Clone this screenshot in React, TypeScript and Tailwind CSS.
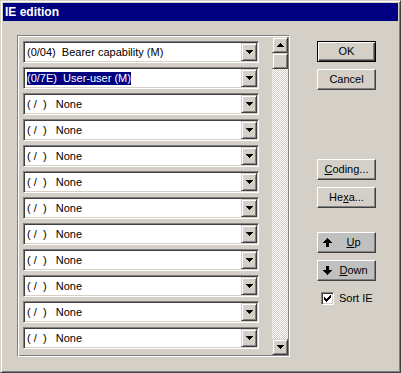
import React from "react";

const rows: string[] = [
    "(0/04)  Bearer capability (M)",
    "(0/7E)  User-user (M)",
    ...Array.from({ length: 10 }, () => "( /  )   None"),
];

const raised = "border border-t-[#d4d0c8] border-l-[#d4d0c8] border-r-[#404040] border-b-[#404040] shadow-[inset_1px_1px_#fff,inset_-1px_-1px_#808080] bg-[#d4d0c8]";
const button = "border border-t-white border-l-white border-r-[#404040] border-b-[#404040] shadow-[inset_-1px_-1px_#808080]";

// small black triangle, pixel rows
const Tri: React.FC<{ down?: boolean }> = ({ down }) => {
    const widths = down ? [7, 5, 3, 1] : [1, 3, 5, 7];
    return (
        <svg width="7" height="4" viewBox="0 0 7 4" shapeRendering="crispEdges">
            {widths.map((w, i) => (
                <rect key={i} x={(7 - w) / 2} y={i} width={w} height={1} fill="#000" />
            ))}
        </svg>
    );
};

const BigArrow: React.FC<{ down?: boolean }> = ({ down }) => {
    const head = [1, 3, 5, 7, 9];
    const parts = head.map((w, i) => ({ x: (9 - w) / 2, y: i, w }));
    const stem = [5, 6, 7, 8].map((y) => ({ x: 3, y, w: 3 }));
    const all = [...parts, ...stem];
    return (
        <svg width="9" height="9" viewBox="0 0 9 9" shapeRendering="crispEdges">
            {all.map((p, i) => (
                <rect key={i} x={p.x} y={down ? 8 - p.y : p.y} width={p.w} height={1} fill="#000" />
            ))}
        </svg>
    );
};

const Combo: React.FC<{ text: string; selected?: boolean }> = ({ text, selected }) => (
    <div className="h-[22px] w-[236px] bg-white border border-t-[#808080] border-l-[#808080] border-r-white border-b-white shadow-[inset_1px_1px_#404040,inset_-1px_-1px_#d4d0c8] p-[1px] flex">
        <div className="flex-1 flex items-center pl-[2px] whitespace-pre">
            {selected ? <span className="bg-[#000080] text-white leading-[13px]">{text}</span> : <span>{text}</span>}
        </div>
        <div className={`w-[16px] h-full flex items-center justify-center ${raised}`}>
            <Tri down />
        </div>
    </div>
);

const Btn: React.FC<{ children: React.ReactNode; className?: string }> = ({ children, className }) => (
    <div className={`h-[21px] w-[59px] flex items-center justify-center bg-[#d4d0c8] ${button} ${className ?? ""}`}>{children}</div>
);

export default function App() {
    return (
        <div className="w-[401px] h-[373px] bg-[#d4d0c8] border border-t-[#d4d0c8] border-l-[#d4d0c8] border-r-[#404040] border-b-[#404040] shadow-[inset_1px_1px_#fff,inset_-1px_-1px_#808080] p-[2px] flex flex-col font-['Liberation_Sans',Arial,sans-serif] text-[11px] text-black">
            <div className="h-[18px] shrink-0 bg-[#000080] flex items-center pl-[2px] text-white font-bold text-[12px]">IE edition</div>
            <div className="flex pt-[14px] pl-[14px]">
                <div className="w-[273px] h-[322px] border border-t-[#808080] border-l-[#808080] border-r-white border-b-white shadow-[inset_1px_1px_#fff,inset_-1px_-1px_#808080] p-[1px] flex">
                    <div className="flex flex-col gap-[4px] pl-[4px] pt-[4px]">
                        {rows.map((r, i) => (
                            <Combo key={i} text={r} selected={i === 1} />
                        ))}
                    </div>
                    <div className="ml-auto w-[16px] h-full flex flex-col">
                        <div className={`h-[16px] flex items-center justify-center ${raised}`}>
                            <Tri />
                        </div>
                        <div className={`h-[16px] ${raised}`}></div>
                        <div className="flex-1 bg-[repeating-conic-gradient(#fff_0_25%,#d4d0c8_0_50%)] bg-[length:2px_2px]"></div>
                        <div className={`h-[16px] flex items-center justify-center ${raised}`}>
                            <Tri down />
                        </div>
                    </div>
                </div>
                <div className="ml-[27px] w-[59px] flex flex-col">
                    <div className="mt-[6px] h-[21px] w-[59px] flex items-center justify-center bg-[#d4d0c8] border border-black shadow-[inset_1px_1px_#fff,inset_-1px_-1px_#404040,inset_-2px_-2px_#808080]">OK</div>
                    <Btn className="mt-[7px]">Cancel</Btn>
                    <Btn className="mt-[69px]">
                        <span><span className="underline">C</span>oding...</span>
                    </Btn>
                    <Btn className="mt-[7px]">
                        <span>He<span className="underline">x</span>a...</span>
                    </Btn>
                    <div className={`mt-[24px] h-[21px] w-[59px] flex items-center bg-[#c0c0c0] pl-[5px] ${button}`}>
                        <BigArrow />
                        <span className="flex-1 text-center"><span className="underline">U</span>p</span>
                    </div>
                    <div className={`mt-[7px] h-[21px] w-[59px] flex items-center bg-[#c0c0c0] pl-[5px] ${button}`}>
                        <BigArrow down />
                        <span className="flex-1 text-center"><span className="underline">D</span>own</span>
                    </div>
                    <div className="mt-[9px] pl-[4px] flex items-center">
                        <div className="w-[13px] h-[13px] bg-white border border-t-[#808080] border-l-[#808080] border-r-white border-b-white shadow-[inset_1px_1px_#404040,inset_-1px_-1px_#d4d0c8] flex items-center justify-center">
                            <svg width="7" height="7" viewBox="0 0 7 7" shapeRendering="crispEdges">
                                <path d="M0 2h1v3h-1zM1 3h1v3h-1zM2 4h1v3h-1zM3 3h1v3h-1zM4 2h1v3h-1zM5 1h1v3h-1zM6 0h1v3h-1z" fill="#000" />
                            </svg>
                        </div>
                        <span className="ml-[5px]">Sort IE</span>
                    </div>
                </div>
            </div>
        </div>
    );
}
